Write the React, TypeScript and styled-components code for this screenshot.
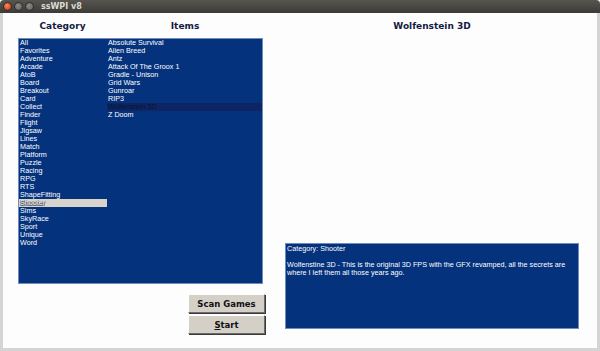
import React, { useState } from "react";
import styled, { createGlobalStyle } from "styled-components";

const GlobalStyle = createGlobalStyle`
  html, body {
    margin: 0;
    padding: 0;
    background: #ffffff;
  }
  * {
    box-sizing: border-box;
  }
`;

const Window = styled.div`
  width: 600px;
  height: 351px;
  display: flex;
  flex-direction: column;
  overflow: hidden;
`;

const TitleBar = styled.div`
  height: 13px;
  display: flex;
  align-items: center;
  padding-left: 3px;
  background: linear-gradient(#56554f, #3c3b37);
  border-radius: 4px 4px 0 0;
`;

const WindowButton = styled.span<{ $close?: boolean }>`
  width: 9px;
  height: 9px;
  border-radius: 50%;
  margin-right: 2px;
  background: ${(p) =>
    p.$close
      ? "radial-gradient(circle at 40% 35%, #f7886a, #e0502a 60%, #b9391a)"
      : "radial-gradient(circle at 40% 35%, #8b8a85, #5f5e5a)"};
  border: 1px solid #2f2e2b;
`;

const Title = styled.span`
  margin-left: 5px;
  font-family: "DejaVu Sans", sans-serif;
  font-weight: bold;
  font-size: 8px;
  color: #dfdbd2;
`;

const Body = styled.div`
  flex: 1;
  display: flex;
  padding: 0 18px 0 15px;
  background: #fdfdfd;
  border-left: 3px solid #d4d4d4;
  border-right: 3px solid #d4d4d4;
  border-bottom: 3px solid #d4d4d4;
`;

const LeftPane = styled.div`
  width: 247px;
  display: flex;
  flex-direction: column;
`;

const Headers = styled.div`
  height: 25px;
  display: flex;
`;

const Header = styled.div<{ $width: number }>`
  width: ${(p) => p.$width}px;
  display: flex;
  align-items: center;
  justify-content: center;
  padding-top: 1px;
  font-family: "DejaVu Sans", sans-serif;
  font-weight: bold;
  font-size: 9px;
  color: #141a44;
`;

const Lists = styled.div`
  width: 245px;
  height: 246px;
  display: flex;
  background: #05327d;
  border: 1px solid #6f8cbc;
`;

const List = styled.ul<{ $width: number }>`
  width: ${(p) => p.$width}px;
  margin: 0;
  padding: 0;
  list-style: none;
`;

const Row = styled.li<{ $state?: "cat" | "item" }>`
  height: 8px;
  line-height: 8px;
  padding-left: 1px;
  font-family: "Liberation Sans", Arial, sans-serif;
  font-size: 7.2px;
  white-space: nowrap;
  cursor: default;
  color: ${(p) => (p.$state === "item" ? "#0b1435" : "#ffffff")};
  text-shadow: ${(p) =>
    p.$state === "cat"
      ? "0.5px 0.5px 0 #55575e, -0.5px -0.5px 0 #55575e, 0.5px -0.5px 0 #55575e, -0.5px 0.5px 0 #55575e"
      : "none"};
  background: ${(p) =>
    p.$state === "cat" ? "#d8d4cc" : p.$state === "item" ? "#0d2563" : "transparent"};
`;

const Buttons = styled.div`
  margin-top: 10px;
  display: flex;
  flex-direction: column;
  align-items: flex-end;
  gap: 2px;
`;

const Button = styled.button`
  width: 77px;
  height: 19px;
  padding: 0;
  background: #d4d0c8;
  border: 1px solid;
  border-color: #ffffff #6e6c68 #6e6c68 #ffffff;
  box-shadow: 1px 1px 0 #3a3a3a;
  font-family: "DejaVu Sans", sans-serif;
  font-weight: bold;
  font-size: 8.5px;
  color: #111111;

  u {
    text-decoration: underline;
  }
`;

const RightPane = styled.div`
  flex: 1;
  margin-left: 20px;
  display: flex;
  flex-direction: column;
`;

const Preview = styled.div`
  height: 205px;
`;

const Description = styled.div`
  height: 86px;
  padding: 1px 1px;
  background: #05327d;
  border: 1px solid #6f8cbc;
  font-family: "Liberation Sans", Arial, sans-serif;
  font-size: 7.2px;
  line-height: 8px;
  color: #ffffff;

  p {
    margin: 0 0 8px 0;
  }
`;

const categories = [
  "All", "Favorites", "Adventure", "Arcade", "AtoB", "Board", "Breakout", "Card",
  "Collect", "Finder", "Flight", "Jigsaw", "Lines", "Match", "Platform", "Puzzle",
  "Racing", "RPG", "RTS", "ShapeFitting", "Shooter", "Sims", "SkyRace", "Sport",
  "Unique", "Word",
];

const items = [
  "Absolute Survival", "Alien Breed", "Antz", "Attack Of The Groox 1",
  "Gradle - Unison", "Grid Wars", "Gunroar", "RIP3", "Wolfenstein 3D", "Z Doom",
];

const App: React.FC = () => {
  const [category, setCategory] = useState<string>("Shooter");
  const [item, setItem] = useState<string>("Wolfenstein 3D");

  return (
    <>
      <GlobalStyle />
      <Window>
        <TitleBar>
          <WindowButton $close />
          <WindowButton />
          <WindowButton />
          <Title>ssWPI v8</Title>
        </TitleBar>
        <Body>
          <LeftPane>
            <Headers>
              <Header $width={89}>Category</Header>
              <Header $width={156}>Items</Header>
            </Headers>
            <Lists>
              <List $width={88}>
                {categories.map((c) => (
                  <Row
                    key={c}
                    $state={c === category ? "cat" : undefined}
                    onClick={() => setCategory(c)}
                  >
                    {c}
                  </Row>
                ))}
              </List>
              <List $width={155}>
                {items.map((i) => (
                  <Row
                    key={i}
                    $state={i === item ? "item" : undefined}
                    onClick={() => setItem(i)}
                  >
                    {i}
                  </Row>
                ))}
              </List>
            </Lists>
            <Buttons>
              <Button>Scan Games</Button>
              <Button>
                <u>S</u>tart
              </Button>
            </Buttons>
          </LeftPane>
          <RightPane>
            <Headers>
              <Header $width={294}>{item}</Header>
            </Headers>
            <Preview />
            <Description>
              <p>Category: {category}</p>
              <p>
                Wolfenstine 3D - This is the original 3D FPS with the GFX revamped, all the
                secrets are where I left them all those years ago.
              </p>
            </Description>
          </RightPane>
        </Body>
      </Window>
    </>
  );
};

export default App;
